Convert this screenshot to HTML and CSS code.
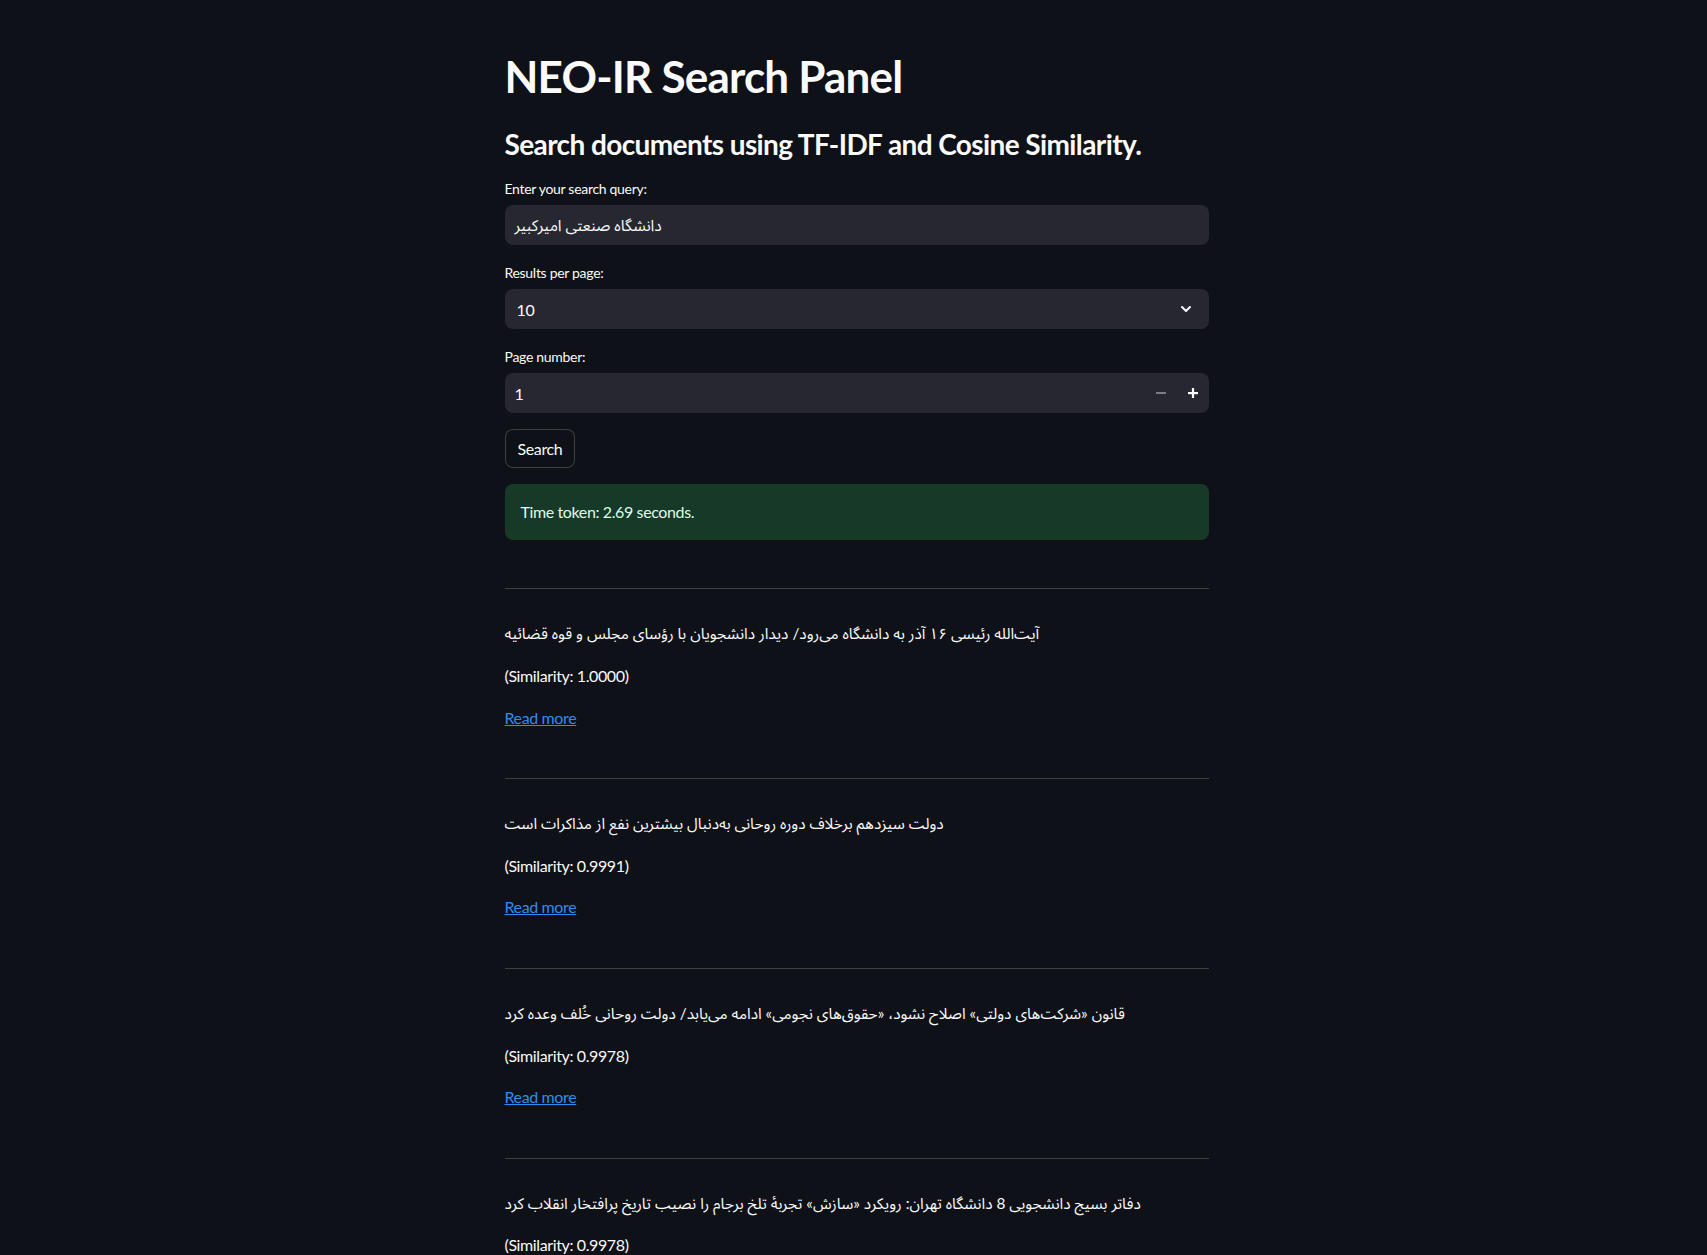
FILE: index.html
```html
<!DOCTYPE html>
<html lang="en">
<head>
<meta charset="utf-8">
<title>NEO-IR Search Panel</title>
<link rel="stylesheet" href="styles.css">
</head>
<body>
<main class="main">
  <div class="stack">
    <h1 class="page-title">NEO-IR Search Panel</h1>
    <h3 class="page-subtitle">Search documents using TF-IDF and Cosine Similarity.</h3>

    <div class="widget">
      <label class="widget-label">Enter your search query:</label>
      <div class="field"><span class="field-value fa-query">دانشگاه صنعتی امیرکبیر</span></div>
    </div>

    <div class="widget">
      <label class="widget-label">Results per page:</label>
      <div class="field field-select">
        <span class="field-value">10</span>
        <svg class="chevron" width="16" height="16" viewBox="0 0 24 24"><path d="M6 9l6 6 6-6" fill="none" stroke="#fafafa" stroke-width="3" stroke-linecap="round" stroke-linejoin="round"/></svg>
      </div>
    </div>

    <div class="widget">
      <label class="widget-label">Page number:</label>
      <div class="field field-number">
        <span class="field-value">1</span>
        <div class="steppers">
          <span class="step step-disabled"><svg width="12" height="12" viewBox="0 0 12 12"><rect x="1" y="5" width="10" height="2" fill="currentColor"/></svg></span>
          <span class="step"><svg width="12" height="12" viewBox="0 0 12 12"><rect x="1" y="5" width="10" height="2.2" fill="currentColor"/><rect x="4.9" y="1" width="2.2" height="10" fill="currentColor"/></svg></span>
        </div>
      </div>
    </div>

    <div><button class="btn">Search</button></div>

    <div class="alert-success">Time token: 2.69 seconds.</div>

    <hr class="divider">
    <p class="line fa">آیت‌الله رئیسی ۱۶ آذر به دانشگاه می‌رود/ دیدار دانشجویان با رؤسای مجلس و قوه قضائیه</p>
    <p class="line">(Similarity: 1.0000)</p>
    <p class="line"><a href="#" class="link">Read more</a></p>

    <hr class="divider">
    <p class="line fa">دولت سیزدهم برخلاف دوره روحانی به‌دنبال بیشترین نفع از مذاکرات است</p>
    <p class="line">(Similarity: 0.9991)</p>
    <p class="line"><a href="#" class="link">Read more</a></p>

    <hr class="divider">
    <p class="line fa">قانون «شرکت‌های دولتی» اصلاح نشود، «حقوق‌های نجومی» ادامه می‌یابد/ دولت روحانی خُلف وعده کرد</p>
    <p class="line">(Similarity: 0.9978)</p>
    <p class="line"><a href="#" class="link">Read more</a></p>

    <hr class="divider">
    <p class="line fa">دفاتر بسیج دانشجویی 8 دانشگاه تهران: رویکرد «سازش» تجربهٔ تلخ برجام را نصیب تاریخ پرافتخار انقلاب کرد</p>
    <p class="line">(Similarity: 0.9978)</p>
    <p class="line"><a href="#" class="link">Read more</a></p>
  </div>
</main>
</body>
</html>
```
FILE: styles.css
```css
html, body {
  margin: 0;
  padding: 0;
  background: #0e1117;
}
body {
  color: #fafafa;
  font-family: "Lato", "Noto Sans Arabic", "DejaVu Sans", sans-serif;
  font-size: 16px;
  line-height: 1.6;
  letter-spacing: -0.38px;
}
.main {
  width: 704px;
  margin-left: calc(50% - 349px);
  padding-top: 30px;
  padding-bottom: 80px;
}
.stack {
  display: flex;
  flex-direction: column;
  gap: 16px;
}
.page-title {
  margin: 0;
  padding: 20px 0 9px;
  font-size: 44px;
  font-weight: 700;
  line-height: 1.2;
  letter-spacing: -0.8px;
}
.page-subtitle {
  margin: 0;
  font-size: 28px;
  font-weight: 700;
  line-height: 1.2;
  letter-spacing: -0.6px;
}
.widget {
  display: flex;
  flex-direction: column;
}
.widget-label {
  font-size: 14px;
  line-height: 24px;
  margin-bottom: 4px;
  letter-spacing: -0.3px;
}
.field {
  height: 40px;
  background: #262730;
  border-radius: 8px;
  display: flex;
  align-items: center;
  padding: 0 10px;
  box-sizing: border-box;
}
.field-value {
  font-size: 16px;
  flex: 1;
}
.fa-query {
  font-size: 15.6px;
  letter-spacing: 0;
}
.fa {
  font-size: 15.4px;
  letter-spacing: 0;
}
.field-select {
  padding: 0 12px 0 12px;
}
.chevron {
  margin-right: 3px;
}
.field-number {
  padding-right: 0;
}
.steppers {
  display: flex;
  height: 100%;
}
.step {
  width: 32px;
  display: flex;
  align-items: center;
  justify-content: center;
  color: #fafafa;
}
.step-disabled {
  color: #7a7c84;
}
.btn {
  font-family: inherit;
  font-size: 16px;
  letter-spacing: -0.38px;
  color: #fafafa;
  background: #0e1117;
  border: 1px solid rgba(250, 250, 250, 0.2);
  border-radius: 8px;
  padding: 0 12px;
  height: 39px;
  line-height: 1.6;
}
.alert-success {
  background: #173928;
  color: #dffde9;
  border-radius: 8px;
  padding: 16px;
  line-height: 24px;
}
.divider {
  margin: 32px 0 16px;
  border: none;
  height: 1px;
  background: rgba(250, 250, 250, 0.2);
}
.line {
  margin: 0;
  line-height: 25.6px;
}
.link {
  color: #2d8cf0;
  text-decoration: underline;
}
```
